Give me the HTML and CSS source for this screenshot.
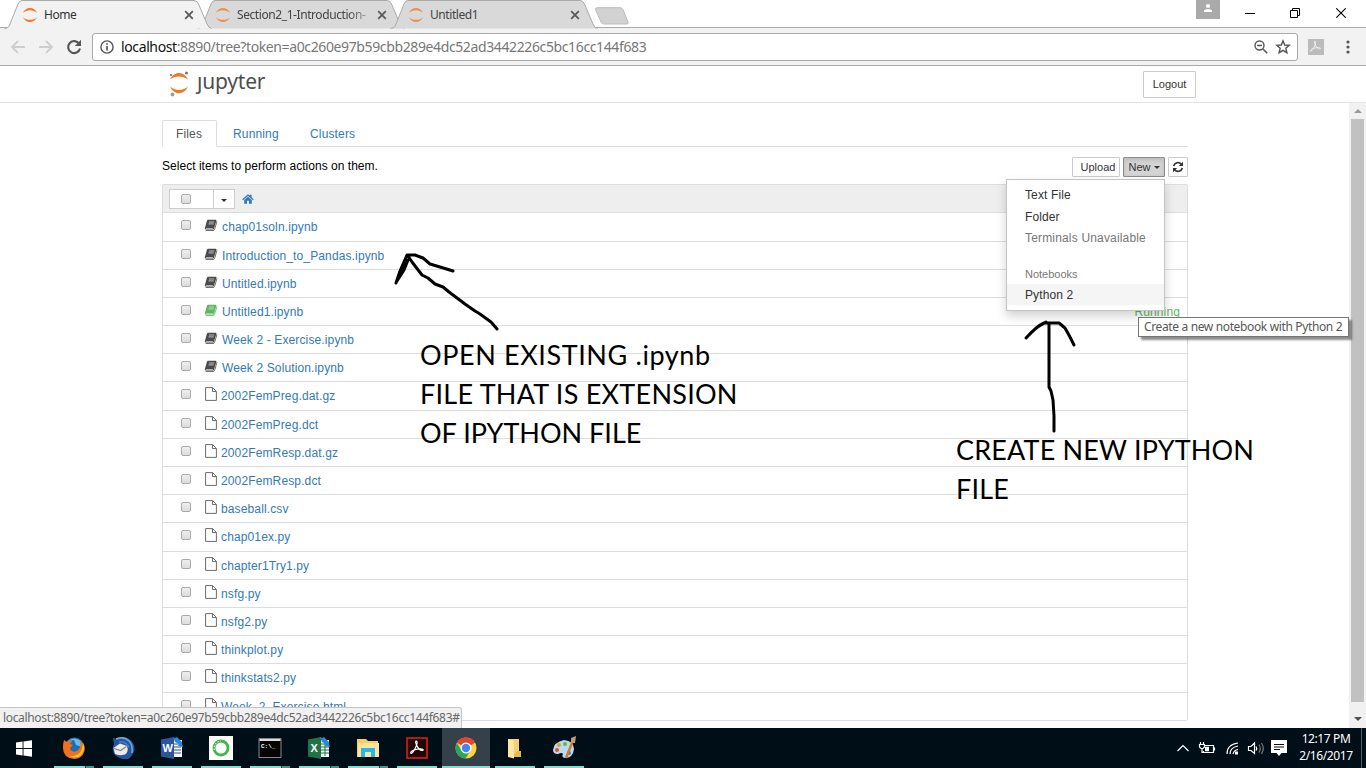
FILE: index.html
```html
<!DOCTYPE html>
<html lang="en">
<head>
<meta charset="utf-8">
<title>Home</title>
<link rel="stylesheet" href="styles.css">
</head>
<body>
<svg class="defs" aria-hidden="true">
  <symbol id="tabshape" viewBox="0 0 208 29"><path d="M.5 28.5C4 28 5 27 6 24L14 4Q15.500 .5 18 .5H190Q193 .5 194.500 4L203 24Q204.500 28 207.500 28.500" stroke="#aaa"/></symbol>
  <symbol id="rings" viewBox="0 0 16 16"><path d="M.8 5.800C4-.6 12-.6 15.200 5.800 11 2.300 5 2.300 .8 5.800zM.8 10.200C4 16.600 12 16.600 15.200 10.200 11 13.700 5 13.700 .8 10.200z" fill="#f37726"/></symbol>
  <symbol id="close" viewBox="0 0 10 10"><path d="M1.200 1.200l7.600 7.600M8.800 1.200l-7.600 7.600" stroke="#5a5a5a" stroke-width="1.800"/></symbol>
  <symbol id="book" viewBox="0 0 14 13"><path d="M4 .7h7.700q1 .1.700 1L9.700 10.500H1.800q-1.300-.2-.9-1.500L3 1.600Q3.300.8 4 .7z" fill="currentColor"/><path d="M13 2.300l-2.500 8.300q-.2.900-1.200.9H1.600" fill="none" stroke="currentColor" stroke-width=".8"/><path d="M5 3h5.200M4.500 4.900h5.200" stroke="#ddd" stroke-width=".8"/><path d="M2 9.500h6.800" stroke="#ccc" stroke-width=".8"/></symbol>
  <symbol id="file" viewBox="0 0 12 14"><path d="M.6.600H7.600L11.400 4.400V13.400H.6zM7.500.8V4.500H11.200" fill="#fff" stroke="#6b6b6b"/></symbol>
  <symbol id="acro" viewBox="0 0 20 20"><path d="M9 3c2.500 0 .5 5-1.500 9s-4.500 5.500-4.500 3.800c0-2.200 6-4.300 11-4.300 4 0 3.500 2.500.8 1.700C11 12.200 7 3 9 3z" fill="none" stroke="currentColor" stroke-width="1.300"/></symbol>
</svg>

<header class="tabs">
  <div class="tab active"><svg class="shape"><use href="#tabshape"/></svg><svg class="fav"><use href="#rings"/></svg><span>Home</span><svg class="x"><use href="#close"/></svg></div>
  <div class="tab t2"><svg class="shape"><use href="#tabshape"/></svg><svg class="fav"><use href="#rings"/></svg><span class="fade">Section2_1-Introduction-</span><svg class="x"><use href="#close"/></svg></div>
  <div class="tab t3"><svg class="shape"><use href="#tabshape"/></svg><svg class="fav"><use href="#rings"/></svg><span>Untitled1</span><svg class="x"><use href="#close"/></svg></div>
  <svg class="newtab" width="36" height="19" viewBox="0 0 36 19"><path d="M3 .700H26Q28 .700 29 2.500L34 15Q34.700 17 33 17H10Q8 17 7 15L1.500 2.500Q1 1 3 .700z" fill="#d2d2d2" stroke="#bcbcbc"/></svg>
  <div class="window">
    <svg class="user" width="24" height="19" viewBox="0 0 24 19"><path d="M0 0H24V19H0z" fill="#aaa"/><circle cx="12" cy="6" r="2.100" fill="#fff"/><path d="M8 12V10.500Q9 9 12 9T16 10.500V12z" fill="#fff"/></svg>
    <svg width="10" height="10" viewBox="0 0 10 10"><path d="M0 5.500H10" stroke="#000"/></svg>
    <svg width="10" height="10" viewBox="0 0 10 10"><path d="M.5 2.500H7.500V9.500H.5zM2.500 2V.5H9.500V7.500H8" fill="none" stroke="#000"/></svg>
    <svg class="quit" width="10" height="10" viewBox="0 0 10 10"><path d="M.3.300L9.700 9.700M9.700.300L.3 9.700" stroke="#000" stroke-width="1.100"/></svg>
  </div>
</header>

<div class="navbar">
  <svg width="90" height="32" viewBox="0 0 90 32"><path d="M25 14H12.500M18 8L12 14L18 20M39 14H51.500M46 8L52 14L46 20" fill="none" stroke="#cecece" stroke-width="1.800"/><path d="M79.200 10.800A6 6 0 1 0 80 15.500" fill="none" stroke="#555" stroke-width="2.100"/><path d="M81 6.800V13H74.800z" fill="#555"/></svg>
  <div class="address">
    <svg width="14" height="14" viewBox="0 0 14 14"><circle cx="7" cy="7" r="6.100" fill="none" stroke="#555" stroke-width="1.400"/><path d="M7 6v4.500M7 3.300v1.500" stroke="#555" stroke-width="1.700"/></svg>
    <span class="url"><b>localhost</b>:8890/tree?token=a0c260e97b59cbb289e4dc52ad3442226c5bc16cc144f683</span>
    <svg class="zoomicon" width="14" height="14" viewBox="0 0 14 14"><circle cx="5.500" cy="5.500" r="4.500" fill="none" stroke="#555" stroke-width="1.400"/><path d="M3 5.500H8M9 9l4.200 4.200" stroke="#555" stroke-width="1.600"/></svg>
    <svg width="16" height="16" viewBox="0 0 16 16"><path d="M8 1.800l1.700 4.200 4.600.3-3.500 2.900 1.100 4.500L8 11.300l-3.900 2.400 1.100-4.500L1.700 6.300 6.300 6z" fill="none" stroke="#555" stroke-width="1.400"/></svg>
  </div>
  <svg class="ext" width="16" height="16"><rect width="16" height="16" fill="#bbb"/><use href="#acro" width="15" height="15"/></svg>
  <svg class="dots" width="4" height="14" viewBox="0 0 4 14"><circle cx="2" cy="2" r="1.600"/><circle cx="2" cy="7" r="1.600"/><circle cx="2" cy="12" r="1.600"/></svg>
</div>

<section class="page">
  <div class="brandbar">
    <div class="logo">
      <svg width="20" height="28" viewBox="0 0 20 28"><path d="M1 9.500C5 .8 15 .8 19 9.500 14 5.500 6 5.500 1 9.500zM1 16.500C5 25.500 15 25.500 19 16.500 14 21 6 21 1 16.500z" fill="#f37726"/><circle cx="17.500" cy="3" r="1.500" fill="#767677"/><circle cx="2" cy="5" r="1" fill="#616262"/><circle cx="3.500" cy="24.500" r="1.900" fill="#9e9e9e"/></svg>
      <span>ȷupyter</span>
    </div>
    <button class="btn logout">Logout</button>
  </div>

  <div class="content">
    <main>
      <nav><a class="current">Files</a><a>Running</a><a class="cl">Clusters</a></nav>
      <div class="actions">
        <p>Select items to perform actions on them.</p>
        <div class="newwrap">
          <button class="btn up">Upload</button>
          <button class="btn new">New<i class="caret"></i></button>
          <button class="btn re"><svg width="12" height="12" viewBox="0 0 12 12"><path d="M1.700 5A4.300 4.300 0 0 1 9.300 3.300M10.300 7A4.300 4.300 0 0 1 2.700 8.700" fill="none" stroke="#333" stroke-width="1.600"/><path d="M11 .8V5H6.800zM1 11.200V7H5.200z" fill="#333"/></svg></button>
          <div class="menu">
            <a>Text File</a><a class="m2">Folder</a><a class="off">Terminals Unavailable</a>
            <h6>Notebooks</h6>
            <a class="hover">Python 2</a>
          </div>
        </div>
      </div>
      <div class="list">
        <div class="listhead">
          <div class="select"><span><i class="cb"></i></span><span class="drop"><i class="caret"></i></span></div>
          <svg width="12" height="10" viewBox="0 0 12 10"><path d="M6 .2L7.800 1.800V.7H9.600V3.400L11.800 5.300 11 6.200 6 1.900 1 6.200.2 5.300zM6 2.800L9.800 6V9.700H7V6.800H5V9.700H2.200V6z" fill="#337ab7"/></svg>
        </div>
        <div class="row tall"><i class="cb"></i><svg class="bk"><use href="#book"/></svg><a>chap01soln.ipynb</a></div>
        <div class="row"><i class="cb"></i><svg class="bk"><use href="#book"/></svg><a>Introduction_to_Pandas.ipynb</a></div>
        <div class="row"><i class="cb"></i><svg class="bk"><use href="#book"/></svg><a>Untitled.ipynb</a></div>
        <div class="row"><i class="cb"></i><svg class="bk live"><use href="#book"/></svg><a>Untitled1.ipynb</a><em>Running</em></div>
        <div class="row"><i class="cb"></i><svg class="bk"><use href="#book"/></svg><a>Week 2 - Exercise.ipynb</a></div>
        <div class="row"><i class="cb"></i><svg class="bk"><use href="#book"/></svg><a>Week 2 Solution.ipynb</a></div>
        <div class="row tall"><i class="cb"></i><svg class="fl"><use href="#file"/></svg><a>2002FemPreg.dat.gz</a></div>
        <div class="row"><i class="cb"></i><svg class="fl"><use href="#file"/></svg><a>2002FemPreg.dct</a></div>
        <div class="row"><i class="cb"></i><svg class="fl"><use href="#file"/></svg><a>2002FemResp.dat.gz</a></div>
        <div class="row"><i class="cb"></i><svg class="fl"><use href="#file"/></svg><a>2002FemResp.dct</a></div>
        <div class="row"><i class="cb"></i><svg class="fl"><use href="#file"/></svg><a>baseball.csv</a></div>
        <div class="row tall"><i class="cb"></i><svg class="fl"><use href="#file"/></svg><a>chap01ex.py</a></div>
        <div class="row"><i class="cb"></i><svg class="fl"><use href="#file"/></svg><a>chapter1Try1.py</a></div>
        <div class="row"><i class="cb"></i><svg class="fl"><use href="#file"/></svg><a>nsfg.py</a></div>
        <div class="row"><i class="cb"></i><svg class="fl"><use href="#file"/></svg><a>nsfg2.py</a></div>
        <div class="row"><i class="cb"></i><svg class="fl"><use href="#file"/></svg><a>thinkplot.py</a></div>
        <div class="row tall"><i class="cb"></i><svg class="fl"><use href="#file"/></svg><a>thinkstats2.py</a></div>
        <div class="row last"><i class="cb"></i><svg class="fl"><use href="#file"/></svg><a>Week_2_Exercise.html</a></div>
      </div>
    </main>
    <div class="scrollbar"><i class="arrow a-up"></i><div class="thumb"></div><i class="arrow a-down"></i></div>
  </div>
</section>

<div class="status">localhost:8890/tree?token=a0c260e97b59cbb289e4dc52ad3442226c5bc16cc144f683#</div>
<div class="tooltip">Create a new notebook with Python 2</div>

<svg class="ink" viewBox="0 0 1366 768">
  <path d="M497 329L491 322 480 314 475 311 465 304 457 298 453 295 449 292 443 287 435 284 428 278 422 275 412 262 408 256M396 283L400 271 407 255 415 255 423 258 430 264 440 267 453 271M397 281L404 270 408 260M398 277L404 263"/>
  <path d="M1054 431V416L1053 400 1051 391 1049 387V323M1026 338Q1037 326 1044 323H1059L1065 328 1070 337 1074 345M1036 328L1046 322"/>
</svg>
<div class="note n1"><div class="l1">OPEN EXISTING .ipynb</div><div class="l2">FILE THAT IS EXTENSION</div><div class="l3">OF IPYTHON FILE</div></div>
<div class="note n2"><div>CREATE NEW IPYTHON</div><div>FILE</div></div>

<footer class="taskbar">
  <div class="task start"><svg width="16" height="17" viewBox="0 0 16 17"><path d="M0 2.400L6.600 1.500V8H0zM7.500 1.400L16 .2V8H7.500zM0 9H6.600V15.500L0 14.600zM7.500 9H16V16.800L7.500 15.600z" fill="#fff"/></svg></div>
  <div class="task open multi"><svg width="24" height="24" viewBox="0 0 24 24"><circle cx="12.500" cy="11.500" r="10" fill="#1a6fb5"/><path d="M6 5Q12 0 19 5L20 11 14 9 12 4z" fill="#63bfe8"/><path d="M2 4L5 6Q7 4 10 5L8 8 11 9 9 11Q7 13 10 15 14 17 17 13 20 9 17 4 24 8 22.500 15 20 23 12 23 1 22 1 12 1 7 2 4z" fill="#f0701c"/><path d="M21 7Q24 15 18 20 13 23 7 20 17 21 20 13z" fill="#ffc22e"/></svg></div>
  <div class="task open"><svg width="24" height="24" viewBox="0 0 24 24"><path d="M2 2L6 3Q12-1 18 3 24 7 23.500 14 21 21 17 23 9 24 4 19 0 14 3 8z" fill="#24559a"/><path d="M5 3Q13 0 18 5 22 9 21 17" fill="none" stroke="#6aa8dd" stroke-width="1.600"/><path d="M8 6Q14 5 18 11" fill="none" stroke="#3f82c8" stroke-width="1.500"/><path d="M2.500 12L9 7.500 16 10Q18 16 14 18.500 8 20 4 18z" fill="#eeecea"/><path d="M3 12.500L9.500 14.500 15.500 10.500" fill="none" stroke="#8b8078" stroke-width="1.200"/></svg></div>
  <div class="task open"><svg width="24" height="24" viewBox="0 0 24 24"><path d="M13 4H22V21H13z" fill="#f4f7fc"/><path d="M14 8h7M14 11h7M14 14h7M14 17h7" stroke="#2b579a"/><path d="M1 3.500L14 1V23L1 20.500z" fill="#2b579a"/><text x="2.500" y="15.500" class="app">W</text><path d="M13 1L15 2 17 1 22 6 22 8 23 11 18 10 19 8 15 6z" fill="#2588d8"/></svg></div>
  <div class="task open"><svg width="24" height="24" viewBox="0 0 24 24"><path d="M0 0H24V24H0z" fill="#fff"/><circle cx="12" cy="12" r="7" fill="none" stroke="#43b649" stroke-width="2.800"/><path d="M5.500 14A7 7 0 0 1 12 5" fill="none" stroke="#fff" stroke-width="1" stroke-dasharray="1.500 1.500"/></svg></div>
  <div class="task open multi"><svg width="24" height="24" viewBox="0 0 24 24"><path d="M1 2.500H23V21.500H1z" fill="#050505" stroke="#888"/><path d="M1.500 3H22.500V5H1.500z" fill="#ddd"/><text x="3" y="11.500" class="cmd">C:\_</text></svg></div>
  <div class="task open multi"><svg width="24" height="24" viewBox="0 0 24 24"><path d="M13 4H22V21H13z" fill="#f4fbf5"/><path d="M14 8h8M14 11h8M14 14h8M14 17h8M18 7V20" stroke="#217346"/><path d="M1 3.500L14 1V23L1 20.500z" fill="#217346"/><text x="3.500" y="16" class="app">X</text><path d="M13 1L15 2 17 1 22 6 22 8 23 11 18 10 19 8 15 6z" fill="#2588d8"/></svg></div>
  <div class="task open multi"><svg width="24" height="24" viewBox="0 0 24 24"><path d="M1 3H10L12 5H22V21H1z" fill="#f7cc62"/><path d="M2 7H23V21H2z" fill="#ffe397"/><path d="M5 21V12H19V21H15V16H9V21z" fill="#22b8f0"/></svg></div>
  <div class="task open"><svg class="adobe" width="24" height="24" viewBox="0 0 24 24"><path d="M2 2H22V22H2z" fill="#250404" stroke="#e42313" stroke-width="1.500"/><use href="#acro" x="3" y="2" width="18" height="19"/></svg></div>
  <div class="task open chrome"><svg width="24" height="24" viewBox="0 0 24 24"><circle cx="12" cy="12" r="10.500" fill="#ffd345"/><path d="M12 12L2.900 6.800A10.500 10.500 0 0 1 21.100 6.800z" fill="#e34434"/><path d="M2.900 6.800A10.500 10.500 0 0 0 11.500 22.500L16.500 14.500H7.500z" fill="#29a65a"/><path d="M12 7H21.200L19 4 12 5z" fill="#e34434"/><circle cx="12" cy="12" r="5.500" fill="#fff"/><circle cx="12" cy="12" r="4.200" fill="#4285f4"/></svg></div>
  <div class="task open"><svg width="24" height="24" viewBox="0 0 24 24"><path d="M5 3H16V20H5z" fill="#f2cf74"/><path d="M5 3L11 5V22.500L5 21z" fill="#ffe7a3"/><path d="M14 15H18V21H11V19z" fill="#e5b84c"/></svg></div>
  <div class="task open"><svg width="26" height="26" viewBox="0 0 26 26"><path d="M2 15Q3 7 13 5 23 6 23 14 22 23 14 23 10 22 12 19 11 17 7 19 2 19 2 15z" fill="#b9dcf0"/><circle cx="6" cy="15" r="2" fill="#e84b3c"/><circle cx="8" cy="10" r="2" fill="#e9a524"/><circle cx="14" cy="9" r="2" fill="#5db747"/><circle cx="18" cy="18" r="2" fill="#3c80c3"/><path d="M21 8L15 23" stroke="#d07a2c" stroke-width="2.500"/><path d="M20 8L20 3 25 1 24 8z" fill="#c99b6b"/></svg></div>
  <div class="tray">
    <svg width="94" height="20" viewBox="0 0 94 20"><g fill="none" stroke="#fff" stroke-width="1.200"><path d="M.5 13L6 7.500 11.500 13"/><path d="M28 7.500H36.500V14.500H26.500V13M37.500 9.500V12.500M23.500 4V6.500M26.500 4V6.500M22.500 6.500H27.500V9L26 10.500H24L22.500 9zM25 10.500V14.500H28"/><path d="M50 16Q50 6.500 61 5M53 16Q53 9.500 61 8M56 16Q57 12 61 11.500"/><path d="M71.500 8.500H74L77.500 5V15.500L74 12.500H71.500zM79 8.500Q80.500 10.500 79 12.500"/><path d="M82 6.500Q84.500 10.500 82 14.500M84.500 5Q88 10.500 84.500 16" stroke="#777"/></g><path d="M28 8.800H32V13.200H28zM58 13.500H61V16.500H58z" fill="#fff"/></svg>
    <svg class="msg" width="16" height="17" viewBox="0 0 16 17"><path d="M0 0H16V13H10.500L8 16 5.500 13H0z" fill="#fff"/><path d="M3 4.500H13M3 7H13M3 9.500H9" stroke="#000e18"/></svg>
    <div class="clock"><span>12:17 PM</span><span>2/16/2017</span></div>
    <i class="peek"></i>
  </div>
</footer>
</body>
</html>
```
FILE: styles.css
```css
* { box-sizing: border-box; }
body { margin: 0; width: 1366px; height: 768px; overflow: hidden; background: #fff; font: 12px/16px "Liberation Sans", Arial, sans-serif; color: #000; display: flex; flex-direction: column; position: relative; }
svg { display: block; flex: none; }
.defs { position: absolute; width: 0; height: 0; }

.tabs { height: 28px; display: flex; padding-left: 4px; font: 12px/16px "Noto Sans", sans-serif; letter-spacing: -.42px; border-bottom: 1px solid #aaa; flex: none; }
.tab { width: 208px; height: 29px; margin-right: -15px; position: relative; display: flex; padding: 7px 0 0 18px; color: #444; flex: none; }
.tab.active { z-index: 2; color: #333; }
.shape { position: absolute; left: 0; top: 0; width: 208px; height: 29px; fill: #d9d9d9; }
.active .shape { fill: #f2f2f2; }
.fav { width: 16px; height: 16px; position: relative; opacity: .75; }
.active .fav { opacity: 1; }
.tab span { position: relative; width: 132px; margin-left: 6px; white-space: nowrap; line-height: 15px; }
.t2 .fav, .t3 .fav { margin-left: 0; }
.fade { mask-image: linear-gradient(90deg, #000 84%, rgba(0,0,0,.3)); }
.x { width: 10px; height: 10px; position: relative; margin: 3px 0 0 8px; }
.newtab { margin: 7px 0 0 11px; }
.window { margin-left: auto; display: flex; padding-right: 20px; gap: 35px; }
.window svg { margin-top: 8px; }
.window .user { margin: 0 -10px 0 0; }
.window .quit { margin-left: 1px; }

.navbar { height: 38px; background: #f2f2f2; border-bottom: 1px solid #aaa; display: flex; padding-top: 5px; flex: none; }
.address { margin-left: 2px; width: 1206px; height: 28px; background: #fff; border: 1px solid #aaa; border-radius: 3px; display: flex; align-items: center; padding: 0 6px 0 7px; }
.url { font: 14px/20px "Noto Sans", sans-serif; color: #777; margin-left: 7px; white-space: nowrap; letter-spacing: -.38px; }
.url b { font-weight: 400; color: #111; }
.zoomicon { margin: 0 7px 0 auto; }
.ext { margin: 6px 0 0 10px; color: #eee; }
.dots { margin: 7px 0 0 22px; fill: #555; }

.page { height: 662px; flex: none; }
.brandbar { height: 37px; border-bottom: 1px solid #e4e4e4; padding: 5px 170px 0 169px; display: flex; justify-content: space-between; }
.logo { display: flex; height: 28px; }
.logo svg { margin-top: -1px; }
.logo span { font: 21px/20px "Noto Sans", sans-serif; color: #4e4e4e; margin-left: 8px; letter-spacing: -.2px; }
.btn { font: 11px/16px "Liberation Sans", Arial, sans-serif; background: #fff; color: #333; border: 1px solid #ccc; border-radius: 1px; height: 20px; padding: 0; display: flex; align-items: center; justify-content: center; }
.logout { width: 53px; height: 27px; padding-bottom: 1px; }
.content { display: flex; justify-content: space-between; height: 625px; overflow: hidden; }
main { margin-left: 162px; padding-top: 17px; width: 1026px; }
nav { height: 27px; border-bottom: 1px solid #ddd; display: flex; letter-spacing: .15px; }
nav a { color: #337ab7; line-height: 28px; margin-left: 16px; width: 61px; }
nav .current { margin: 0; width: 55px; height: 27px; border: 1px solid #ddd; border-bottom-color: #fff; padding-left: 13px; color: #555; border-radius: 2px 2px 0 0; line-height: 26px; }
.actions { height: 37px; padding-top: 10px; display: flex; justify-content: space-between; }
.actions p { margin: 0; line-height: 18px; letter-spacing: .03px; }
.newwrap { display: flex; gap: 3px; position: relative; }
.up { width: 48px; padding-left: 4px; }
.new { width: 42px; background: #d4d4d4; border-color: #8c8c8c; box-shadow: inset 0 2px 4px rgba(0,0,0,.13); gap: 3px; }
.re { width: 20px; }
.caret { border: 3px solid transparent; border-top-color: #333; border-bottom: 0; }
.menu { position: absolute; z-index: 3; left: -66px; top: 22px; width: 159px; height: 132px; background: #fff; border: 1px solid #c4c4c4; box-shadow: 0 5px 10px rgba(0,0,0,.18); padding-top: 4px; letter-spacing: .12px; }
.menu a { display: block; height: 22px; line-height: 22px; padding-left: 18px; color: #333; }
.menu .off { color: #777; height: 21px; line-height: 21px; letter-spacing: .17px; }
.menu h6 { margin: 16px 0 0; padding-left: 18px; font: 11px/19px "Liberation Sans", sans-serif; letter-spacing: 0; height: 19px; color: #777; }
.menu .hover { background: #f5f5f5; height: 21px; line-height: 22px; }
.list { border: 1px solid #ddd; border-radius: 2px; letter-spacing: .13px; }
.listhead { height: 28px; background: #eee; border-bottom: 1px solid #ddd; display: flex; align-items: center; padding-left: 6px; gap: 7px; }
.select { display: flex; width: 66px; height: 20px; background: #fff; border: 1px solid #ccc; }
.select span { width: 44px; border-right: 1px solid #ccc; padding: 4px 0 0 11px; }
.select .drop { width: 20px; padding: 9px 0 0 7px; border: 0; }
.drop .caret { display: block; width: 6px; }
.cb { display: block; flex: none; width: 10px; height: 10px; border: 1px solid #aaa; border-radius: 2px; background: linear-gradient(#eee, #dcdcdc); }
.row { height: 28px; border-bottom: 1px solid #ddd; display: flex; padding-left: 18px; }
.row.tall { height: 29px; }
.row.last { height: 27px; border: 0; }
.row .cb { margin-top: 7px; }
.row a { color: #337ab7; line-height: 28px; white-space: nowrap; }
.bk { width: 14px; height: 13px; margin: 6px 4px 0 13px; color: #4a4a4a; }
.live { color: #5cb85c; }
.fl { width: 12px; height: 14px; margin: 5px 4px 0 14px; }
.row em { margin-left: auto; padding-right: 7px; font-style: normal; color: #5cb85c; line-height: 28px; }
.scrollbar { width: 17px; background: #f1f1f1; display: flex; flex-direction: column; align-items: center; justify-content: space-between; padding: 6px 0 7px; }
.arrow { border: 4px solid transparent; }
.a-up { border-top: 0; border-bottom-color: #999; }
.a-down { border-bottom: 0; border-top-color: #505050; }
.thumb { width: 13px; height: 583px; background: #c1c1c1; margin-bottom: 9px; }

.status { position: absolute; z-index: 4; left: 0; top: 707px; width: 462px; height: 21px; background: #f1f1f1; border: 1px solid #c4c4c4; border-width: 1px 1px 0 0; border-radius: 0 3px 0 0; font: 12px/20px "Noto Sans", sans-serif; color: #666; padding-left: 3px; white-space: nowrap; letter-spacing: -.34px; }
.tooltip { position: absolute; z-index: 5; left: 1138px; top: 317px; width: 211px; height: 20px; background: #fff; border: 1px solid #767676; box-shadow: 3px 3px 2px rgba(0,0,0,.45); font: 12px/18px "Noto Sans", sans-serif; color: #575757; padding-left: 5px; white-space: nowrap; letter-spacing: -.36px; }
.ink { position: absolute; z-index: 4; left: 0; top: 0; width: 1366px; height: 768px; fill: none; stroke: #000; stroke-width: 3; stroke-linecap: round; stroke-linejoin: round; pointer-events: none; }
.note { position: absolute; z-index: 4; font: 27px/39px Lato, "Open Sans", sans-serif; white-space: nowrap; }
.n1 { left: 420px; top: 335px; }
.n2 { left: 956px; top: 430px; letter-spacing: .17px; }
.l1 { letter-spacing: .6px; }
.l2 { letter-spacing: .25px; }

.taskbar { height: 40px; flex: none; background: #000e18; display: flex; gap: 1px; color: #fff; }
.task { width: 48px; height: 40px; display: flex; align-items: center; justify-content: center; position: relative; }
.start { margin-right: 1px; }
.open::after { content: ""; position: absolute; left: 4px; right: 4px; bottom: 0; height: 2px; background: #83dccb; }
.multi::after { background: linear-gradient(90deg, #83dccb 31px, #173b3c 31px, #173b3c 32px, #4f8e87 32px); }
.chrome { background: #34414a; }
.chrome::after { left: 0; right: 0; }
.app { font: bold 11px "Liberation Sans", sans-serif; fill: #fff; }
.cmd { font: bold 6px "Liberation Mono", monospace; fill: #fff; }
.adobe { color: #fff; }
.tray { margin-left: auto; display: flex; align-items: center; }
.msg { margin-top: 1px; }
.clock { font: 12px/17px "Noto Sans", sans-serif; letter-spacing: -.4px; width: 64px; margin-left: 7px; display: flex; flex-direction: column; align-items: center; white-space: nowrap; position: relative; top: -1px; }
.peek { width: 1px; height: 40px; background: #50606a; margin: 0 4px 0 3px; }
```
